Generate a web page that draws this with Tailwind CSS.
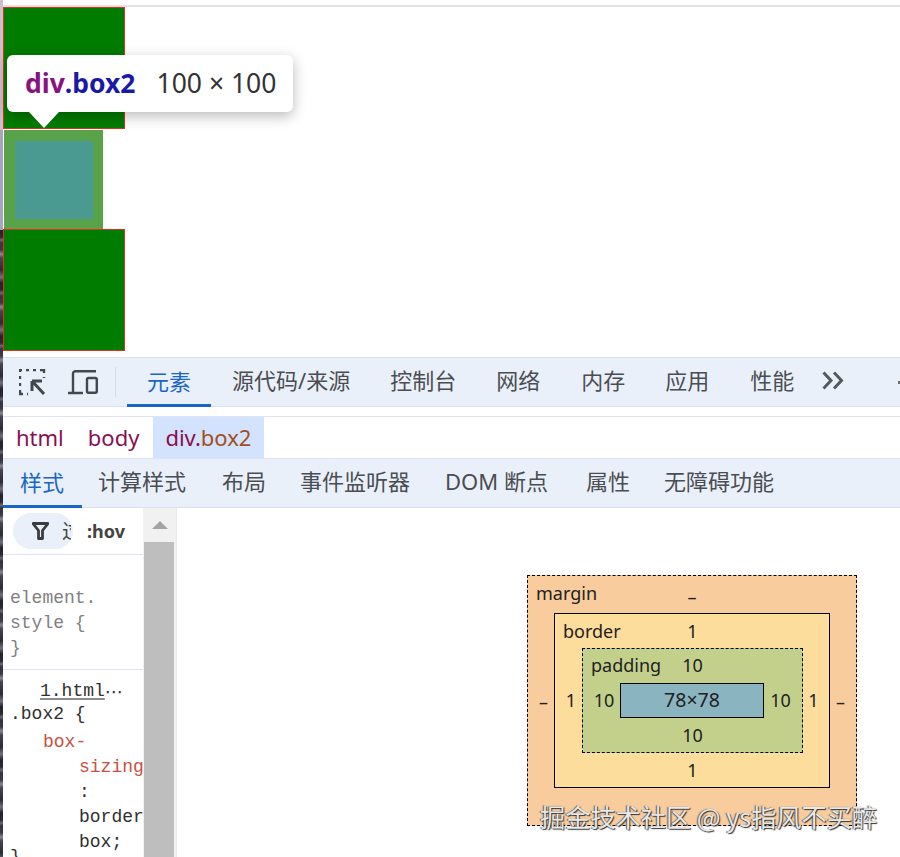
<!DOCTYPE html>
<html lang="en">

<head>
    <meta charset="UTF-8">
    <title>div.box2 devtools</title>
    <script src="https://cdn.jsdelivr.net/npm/@tailwindcss/browser@4"></script>
</head>

<body class="bg-white">
    <div class="relative flex w-[900px] h-[857px] overflow-hidden font-['Noto_Sans','Noto_Sans_CJK_SC',sans-serif]">

        <!-- Desktop showing behind the window -->
        <div class="flex flex-col w-[3px] shrink-0">
            <div class="h-[130px] bg-[#c9c2cc]"></div>
            <div class="h-[100px] bg-[#a9a4bd]"></div>
            <div class="flex-1 bg-[repeating-linear-gradient(180deg,#22222a_0px,#2a2a33_7px,#6a6878_10px,#35333f_13px,#3c3a46_20px,#8a8894_24px,#46444f_28px,#2c2b35_40px,#72707e_47px,#22222a_53px)]"></div>
        </div>

        <div class="flex-1 flex flex-col min-w-0">
            <!-- Page -->
            <div class="h-[5px]"></div>
            <div class="h-[2px] bg-[#e2e2e6]"></div>
            <div class="h-[350px] flex flex-col">
                <div class="w-[122px] h-[122px] bg-[#007c00] border border-[#e0301e]"></div>
                <div class="w-[99px] h-[99px] ml-px mt-px bg-[#58a34a] flex items-center justify-center">
                    <div class="w-[78px] h-[78px] bg-[#4a9a92]"></div>
                </div>
                <div class="w-[122px] h-[122px] bg-[#007c00] border border-[#e0301e]"></div>
            </div>

            <!-- Main toolbar -->
            <div class="h-[50px] flex items-stretch bg-[#eaf0f9] border-t border-b border-[#d9e0f2] text-[22px] leading-none text-[#4a4d52]">
                <div class="w-[112px] shrink-0 flex items-center relative">
                    <svg class="ml-[16px]" width="27" height="27" viewBox="0 0 27 27" fill="none" stroke="#44474c" stroke-width="2.4">
                        <path d="M1 3V1H3M7 1H10M14 1H17M21 1H25V4M25 8V9M1 7V10M1 14V17M1 21V25H4M8 25H9" />
                        <path d="M13 12H23M13 12V22M13 12L25 25" stroke-width="3" />
                    </svg>
                    <svg class="ml-[22px]" width="30" height="25" viewBox="0 0 30 25" fill="none" stroke="#44474c" stroke-width="2.4">
                        <path d="M0 23H15M5 22V3.5C5 2 6 1.200 7.500 1.200H28" />
                        <rect x="19" y="8" width="9.800" height="14.800" rx="1.500" />
                    </svg>
                </div>
                <div class="w-px h-[30px] self-center bg-[#d5dbe8]"></div>
                <div class="ml-[11px] px-[20px] pb-px flex items-center text-[#1a66c6] border-b-[3px] border-[#1a66c6] -mb-px">元素</div>
                <div class="pl-[21px] pr-[40px] pb-[4px] flex items-center">源代码/来源</div>
                <div class="pr-[40px] pb-[4px] flex items-center">控制台</div>
                <div class="pr-[41px] pb-[4px] flex items-center">网络</div>
                <div class="pr-[40px] pb-[4px] flex items-center">内存</div>
                <div class="pr-[41px] pb-[4px] flex items-center">应用</div>
                <div class="pr-[28px] pb-[4px] flex items-center">性能</div>
                <div class="flex items-center pb-[3px]">
                    <svg width="22" height="19" viewBox="0 0 22 19" fill="none" stroke="#55585d" stroke-width="3">
                        <path d="M1.500 1.500L9 9.500L1.500 17.500M12 1.500L19.500 9.500L12 17.500" />
                    </svg>
                </div>
                <div class="ml-auto self-center w-[2px] h-[3px] bg-[#6b6e73]"></div>
            </div>

            <div class="h-[9px]"></div>

            <!-- Breadcrumb -->
            <div class="h-[43px] flex items-stretch border-t border-b border-[#dde2f5] text-[22px] text-[#8a0f52]">
                <div class="pl-[13px] pr-[11px] flex items-center">html</div>
                <div class="pl-[13px] pr-[14px] flex items-center">body</div>
                <div class="pl-[12px] pr-[13px] flex items-center bg-[#d3e3fd]">div.<span class="text-[#a34e1c]">box2</span></div>
            </div>

            <!-- Sidebar tabs -->
            <div class="h-[49px] flex items-stretch bg-[#eaf0f9] border-b border-[#d9e0f2] text-[22px] leading-none text-[#4a4d52]">
                <div class="pl-[17px] pr-[18px] pb-px flex items-center text-[#1a66c6] border-b-[3px] border-[#1a66c6] -mb-px">样式</div>
                <div class="pl-[16px] pr-[18px] pb-[4px] flex items-center">计算样式</div>
                <div class="pl-[18px] pr-[16px] pb-[4px] flex items-center">布局</div>
                <div class="pl-[18px] pr-[17px] pb-[4px] flex items-center">事件监听器</div>
                <div class="pl-[18px] pr-[20px] pb-[4px] flex items-center">DOM 断点</div>
                <div class="pl-[18px] pr-[17px] pb-[4px] flex items-center">属性</div>
                <div class="px-[17px] pb-[4px] flex items-center">无障碍功能</div>
            </div>

            <!-- Panels -->
            <div class="flex-1 flex min-h-0">
                <div class="w-[140px] shrink-0 overflow-hidden font-['Liberation_Mono',monospace] text-[18px] leading-[25px] text-[#303030]">
                    <div class="h-[47px] flex items-center border-b border-[#dde2f5] font-['Noto_Sans',sans-serif]">
                        <div class="ml-[10px] w-[60px] h-[36px] rounded-full bg-[#eaf0f9] flex items-center overflow-hidden">
                            <div class="w-[58px] flex items-center overflow-hidden">
                                <svg class="ml-[19px] shrink-0" width="17" height="18" viewBox="0 0 17 18" fill="none" stroke="#3a3c40" stroke-width="2.800">
                                    <path d="M1 1.500H16L10.500 8.500V16.500H6.500V8.500Z" stroke-linejoin="round" />
                                </svg>
                                <span class="ml-[13px] text-[20px] leading-none font-['Noto_Sans_CJK_SC',sans-serif] text-[#444]">过</span>
                            </div>
                        </div>
                        <span class="ml-[14px] text-[18px] font-bold text-[#444]">:hov</span>
                    </div>
                    <div class="h-[115px] pt-[31px] pl-[7px] border-b border-[#dde2f5] text-[#808080]">
                        <div>element.</div>
                        <div>style {</div>
                        <div>}</div>
                    </div>
                    <div class="pt-[9px] pl-[7px]">
                        <div class="pl-[30px] flex">
                            <span class="underline decoration-[#8c8c8c] decoration-2 underline-offset-2">1.html</span><span class="font-['DejaVu_Sans',sans-serif]">⋯</span>
                        </div>
                        <div class="-mt-[2px]">.box2 {</div>
                        <div class="mt-[3px] pl-[33px] text-[#c8503f]">box-</div>
                        <div class="pl-[69px] text-[#c8503f]">sizing</div>
                        <div class="pl-[69px]">:</div>
                        <div class="pl-[69px]">border</div>
                        <div class="pl-[69px]">box;</div>
                        <div class="-mt-[10px]">}</div>
                    </div>
                </div>

                <!-- Scrollbar -->
                <div class="w-[33px] shrink-0 bg-[#f1f1f1] flex flex-col">
                    <div class="h-[34px] flex items-center justify-center">
                        <div class="w-0 h-0 border-x-[8px] border-x-transparent border-b-[8px] border-b-[#a3a3a3]"></div>
                    </div>
                    <div class="flex-1 w-[30px] ml-px bg-[#bebebe]"></div>
                </div>

                <!-- Box model -->
                <div class="flex-1 border-l border-[#e6e9f5] pl-[350px] pt-[67px]">
                    <div class="w-[330px] h-[251px] grid grid-cols-[26px_276px_26px] grid-rows-[37px_175px_37px] bg-[#f8cc9d] border border-dashed border-black text-[18px] leading-none text-[#222]">
                        <div class="col-span-3 grid grid-cols-[1fr_auto_1fr] items-center pb-[4px]">
                            <span class="pl-[8px]">margin</span><span class="mt-[8px]">–</span>
                        </div>
                        <div class="flex items-center justify-center pl-[5px] pt-[2px]">–</div>
                        <div class="grid grid-cols-[27px_221px_26px] grid-rows-[34px_105px_34px] bg-[#fddd9b] border border-black">
                            <div class="col-span-3 grid grid-cols-[1fr_auto_1fr] items-center">
                                <span class="pl-[8px]">border</span><span class="pl-[1px]">1</span>
                            </div>
                            <div class="flex items-center justify-center pl-[5px] pb-[2px]">1</div>
                            <div class="grid grid-cols-[37px_144px_38px] grid-rows-[34px_35px_34px] bg-[#c3d08b] border border-dashed border-black">
                                <div class="col-span-3 grid grid-cols-[1fr_auto_1fr] items-center pb-[2px]">
                                    <span class="pl-[8px]">padding</span><span>10</span>
                                </div>
                                <div class="flex items-center justify-center pl-[5px] pb-[2px]">10</div>
                                <div class="flex items-center justify-center pb-[2px] text-[19.5px] bg-[#8ab4c0] border border-black">78×78</div>
                                <div class="flex items-center justify-center pr-[5px] pb-[2px]">10</div>
                                <div class="col-span-3 flex items-center justify-center">10</div>
                            </div>
                            <div class="flex items-center justify-center pr-[5px] pb-[2px]">1</div>
                            <div class="col-span-3 flex items-center justify-center pl-[1px]">1</div>
                        </div>
                        <div class="flex items-center justify-center pr-[5px] pt-[2px]">–</div>
                    </div>
                </div>
            </div>
        </div>

        <!-- Inspect tooltip -->
        <div class="absolute left-[7px] top-[55px] w-[286px] h-[57px] bg-white rounded-md shadow-[0_4px_14px_rgba(0,0,0,0.28)] flex items-center pl-[18px] text-[26.5px]">
            <span class="font-bold text-[#881280]">div</span><span class="font-bold text-[#1a1aa6]">.box2</span>
            <span class="ml-[21px] text-[#333]">100 × 100</span>
        </div>
        <div class="absolute left-[29px] top-[112px] w-0 h-0 border-x-[15px] border-x-transparent border-t-[16px] border-t-white"></div>

        <!-- Watermark -->
        <div class="absolute left-[540px] top-[798px] text-[25.2px] leading-[36px] whitespace-nowrap text-[#e8e8e8] font-['Noto_Sans_CJK_SC',sans-serif] [text-shadow:1px_1px_1px_#333,-1px_0_1px_#555]">掘金技术社区 @ ys指风不买醉</div>
    </div>
</body>

</html>
